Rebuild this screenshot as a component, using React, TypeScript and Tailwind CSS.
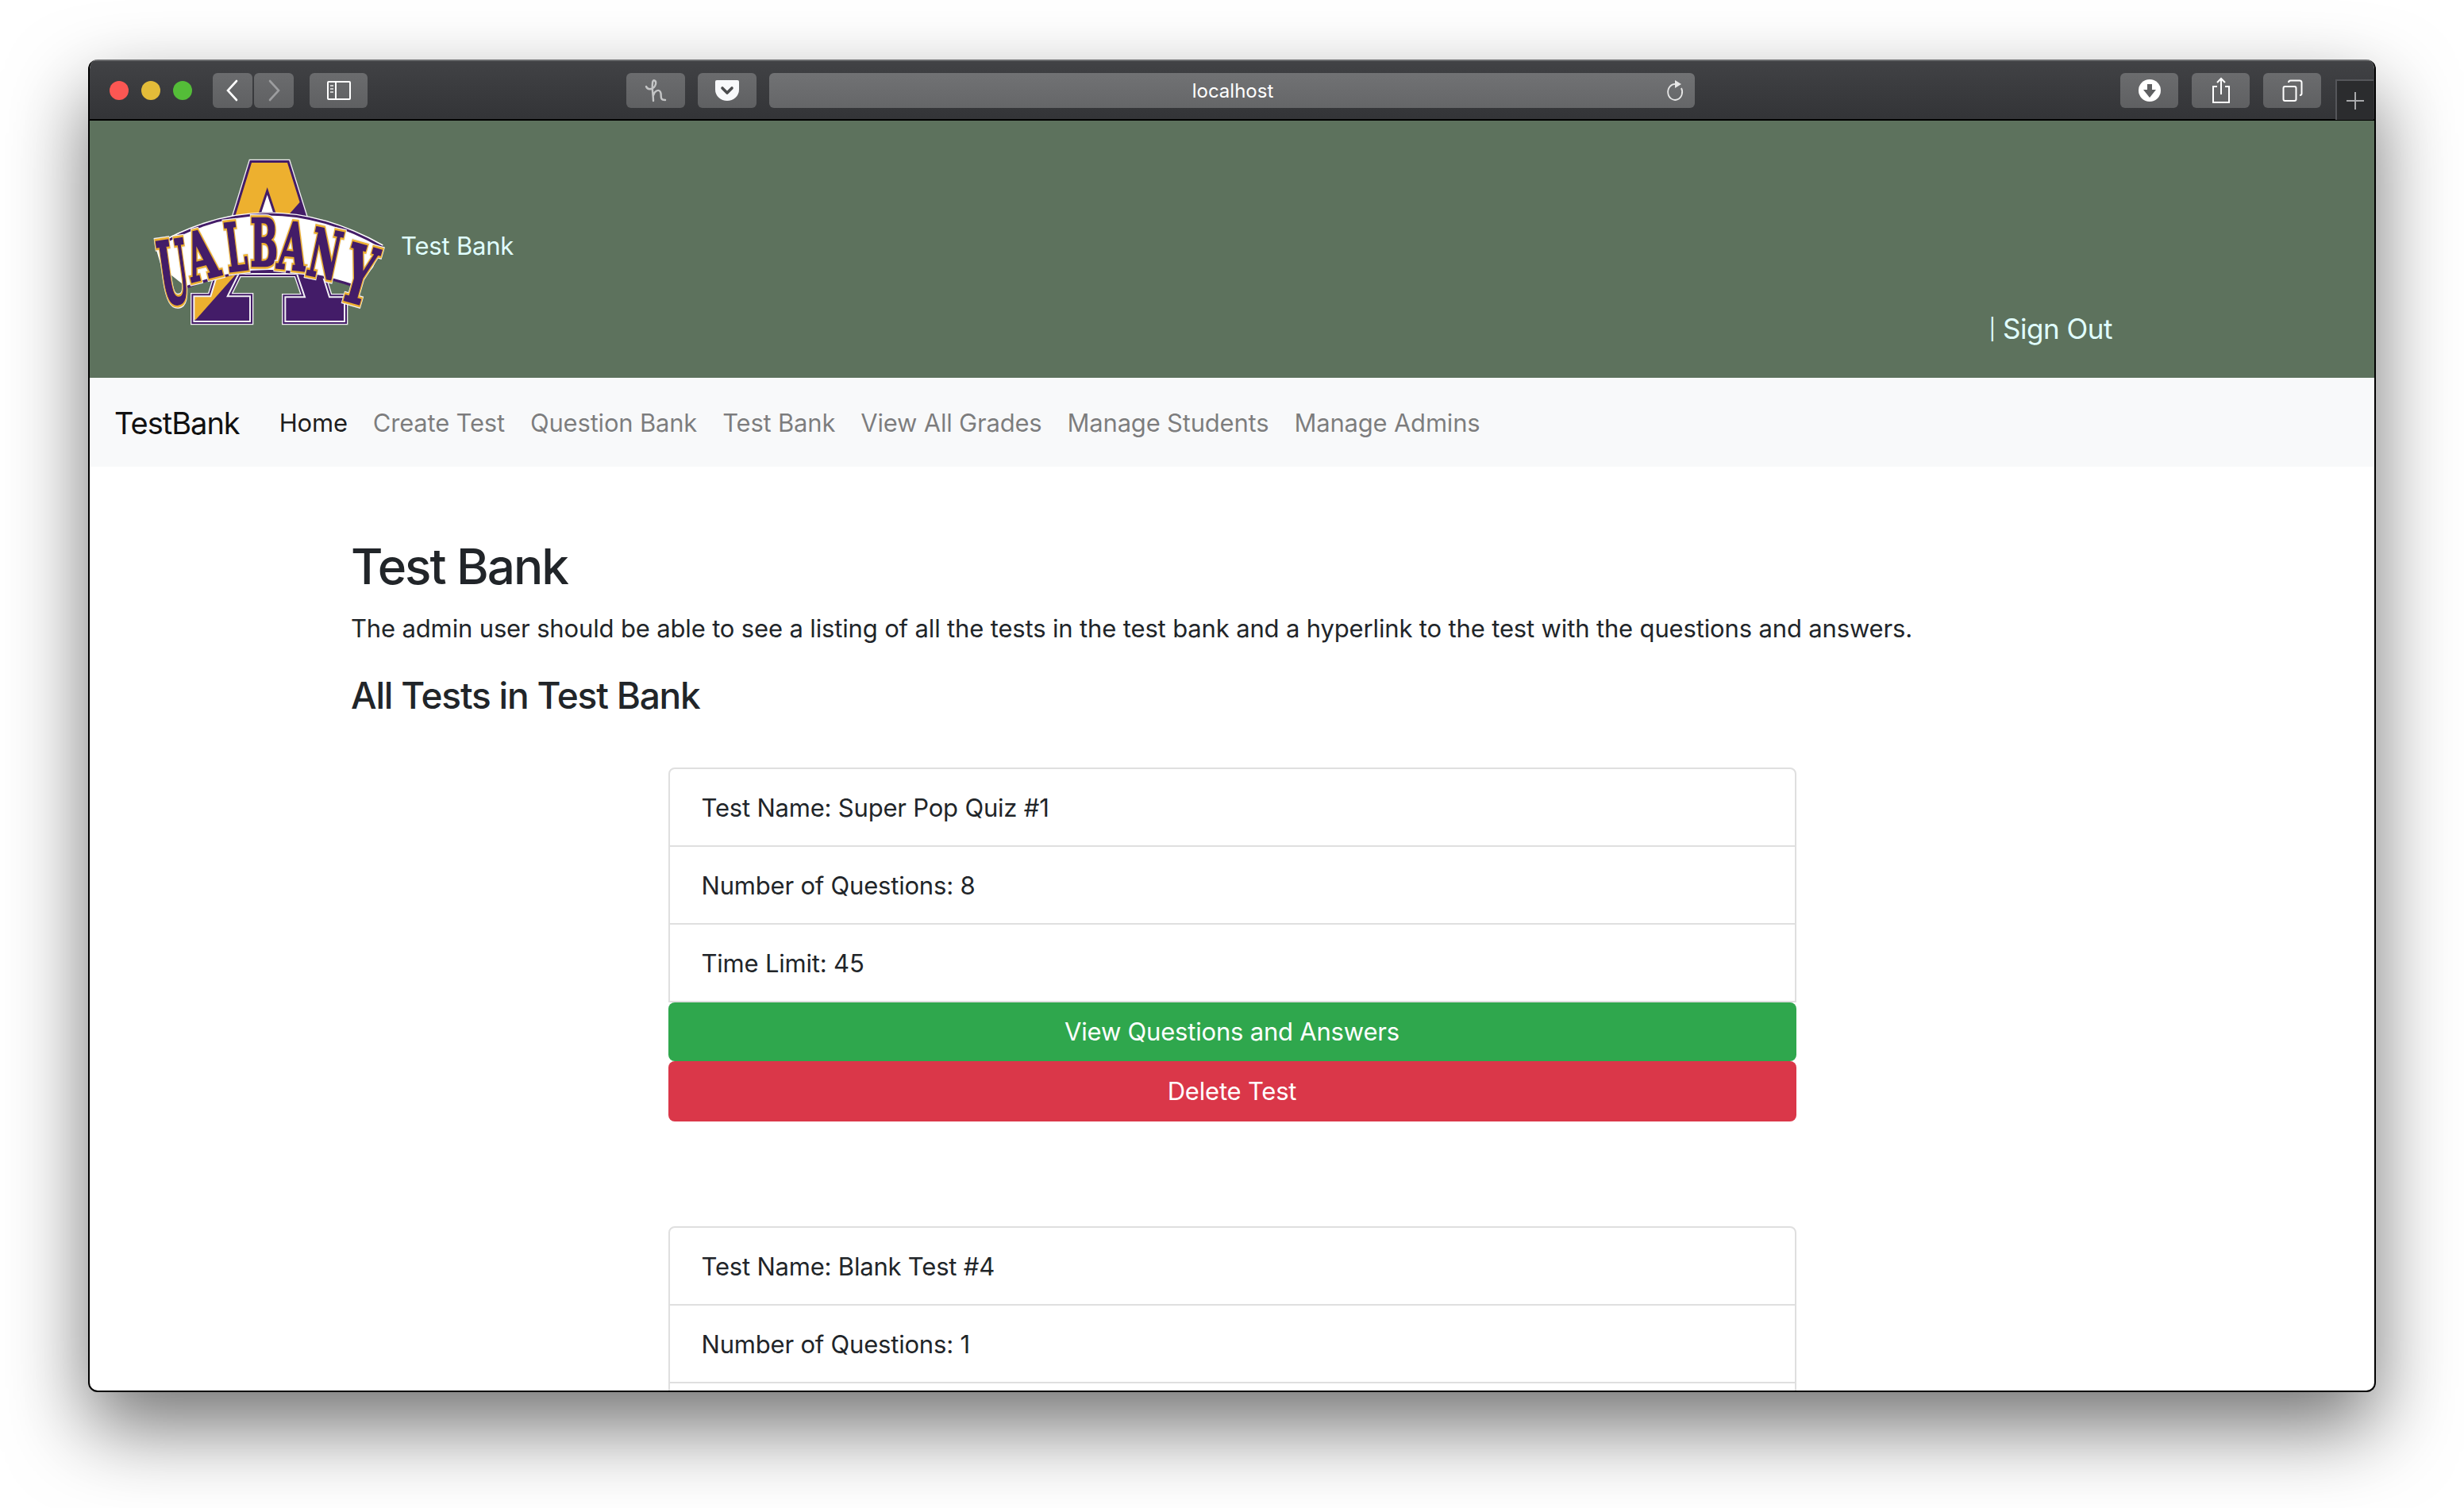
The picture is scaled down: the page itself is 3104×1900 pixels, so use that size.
const listItem = "border-2 border-[#dfdfdf] -mt-[2px] first:mt-0 first:rounded-t-lg px-10 pt-[25px] pb-[23px] leading-12 text-[31px] text-[#212529]";
const letterClass = "font-['DejaVu_Serif',serif] [vector-effect:non-scaling-stroke]";

function Logo() {
  const aShape = "M441,75 L576,75 L735,583 L792,583 L792,675 L568,675 L568,583 L642,583 L612,495 L392,495 L350,580 L435,580 L435,675 L223,675 L223,580 L286,580 Z";
  const letters = [
    { c: "U", x: 162, y: 606, r: -8, sx: 1.25, sy: 3.3 },
    { c: "A", x: 272, y: 512, r: -14, sx: 1.5, sy: 2.5 },
    { c: "L", x: 392, y: 482, r: -7, sx: 1.1, sy: 2.5 },
    { c: "B", x: 488, y: 466, r: 0, sx: 1.22, sy: 2.45 },
    { c: "A", x: 588, y: 478, r: 6, sx: 1.4, sy: 2.45 },
    { c: "N", x: 700, y: 508, r: 12, sx: 1.28, sy: 2.5 },
    { c: "Y", x: 818, y: 602, r: 16, sx: 1.55, sy: 3.0 },
  ];
  return (
    <svg viewBox="60 54 900 645" className="w-[300px] h-[215px] shrink-0">
      <defs>
        <clipPath id="aShape">
          <path d={aShape} />
        </clipPath>
        <clipPath id="lowerHalf">
          <rect x="150" y="480" width="700" height="220" />
        </clipPath>
      </defs>
      <path d={aShape} fill="none" stroke="#f2f0f4" strokeWidth="26" />
      <path d={aShape} fill="none" stroke="#431c68" strokeWidth="18" />
      <path d={aShape} fill="#431c68" />
      <g clipPath="url(#aShape)">
        <path d="M230,668 L625,222 L625,40 L150,40 L150,668 Z" fill="#edb02f" />
      </g>
      <path d={aShape} fill="none" stroke="#f2f0f4" strokeWidth="6" clipPath="url(#lowerHalf)" />
      <path d="M500,182 L528,266 L472,266 Z" fill="#fff" stroke="#431c68" strokeWidth="9" />
      <path d="M75,385 Q500,139 938,385 L900,470 L838,548 Q500,425 198,548 L100,470 Z" fill="#fff" />
      <path d="M80,394 Q500,146 935,394" fill="none" stroke="#431c68" strokeWidth="9" />
      <path d="M198,545 Q500,425 840,545" fill="none" stroke="#431c68" strokeWidth="10" />
      {letters.map((l, i) => (
        <g key={i} transform={`translate(${l.x} ${l.y}) rotate(${l.r}) scale(${l.sx} ${l.sy})`} fontSize="100" fontWeight="700" textAnchor="middle">
          <text className={letterClass} fill="#fff" stroke="#f2f0f4" strokeWidth="8">{l.c}</text>
          <text className={letterClass} fill="#431c68" stroke="#edb02f" strokeWidth="6">{l.c}</text>
          <text className={letterClass} fill="#431c68" stroke="#431c68" strokeWidth="2">{l.c}</text>
        </g>
      ))}
    </svg>
  );
}

function ToolbarButton({ w, children, className = "" }: { w: string; children?: React.ReactNode; className?: string }) {
  return (
    <div className={`${w} h-[44px] rounded-md bg-gradient-to-b from-[#6b6c6e] to-[#5f6062] flex items-center justify-center shrink-0 ${className}`}>
      {children}
    </div>
  );
}

function TitleBar() {
  return (
    <div className="h-[77px] shrink-0 bg-gradient-to-b from-[#414245] to-[#333437] border-t-2 border-t-[#6a6b6d] border-b-2 border-b-black flex items-center pl-[25px] pr-[1px]">
      <div className="flex gap-4 shrink-0">
        <div className="w-6 h-6 rounded-full bg-[#fc5753]" />
        <div className="w-6 h-6 rounded-full bg-[#e3bc39]" />
        <div className="w-6 h-6 rounded-full bg-[#54bd38]" />
      </div>
      <div className="flex gap-[2px] ml-[26px]">
        <ToolbarButton w="w-[50px]">
          <svg width="20" height="28" viewBox="0 0 20 28" fill="none" stroke="#fff" strokeWidth="2.6" strokeLinecap="round"><path d="M15 2 L4 14 L15 26" /></svg>
        </ToolbarButton>
        <ToolbarButton w="w-[50px]">
          <svg width="20" height="28" viewBox="0 0 20 28" fill="none" stroke="#9c9d9f" strokeWidth="2.6" strokeLinecap="round"><path d="M5 2 L16 14 L5 26" /></svg>
        </ToolbarButton>
      </div>
      <ToolbarButton w="w-[73px]" className="ml-[20px]">
        <svg width="32" height="26" viewBox="0 0 32 26" fill="none" stroke="#fff" strokeWidth="2"><rect x="2" y="2" width="28" height="22" rx="1" /><path d="M12 2 V24" /><path d="M5 7 H9 M5 11 H9 M5 15 H9" stroke="#ccc" /></svg>
      </ToolbarButton>
      <ToolbarButton w="w-[74px]" className="ml-[326px]">
        <svg width="28" height="30" viewBox="0 0 28 30" fill="none" stroke="#c4c5c6" strokeWidth="2.4" strokeLinecap="round"><path d="M2 10 C4 15 12 14 14 7 C15 2 10 0 10 6 C9 13 11 21 11 28 M11 21 C13 15 18 13 20 17 C22 21 18 27 26 27" /></svg>
      </ToolbarButton>
      <ToolbarButton w="w-[74px]" className="ml-4">
        <svg width="30" height="26" viewBox="0 0 30 26"><path d="M0 2 Q0 0 2 0 H28 Q30 0 30 2 V12 C30 20 23 26 15 26 C7 26 0 20 0 12 Z" fill="#f8f9fb" /><path d="M9 10 L15 16 L21 10" fill="none" stroke="#4b4c4e" strokeWidth="3.6" strokeLinecap="round" strokeLinejoin="round" /></svg>
      </ToolbarButton>
      <div className="w-[1166px] ml-4 h-[44px] rounded-md bg-gradient-to-b from-[#717274] to-[#656668] flex items-center justify-between shrink-0">
        <div className="flex-1 text-center text-[24px] leading-none tracking-normal text-white pl-[39px] pt-[2px]">localhost</div>
        <svg width="24" height="28" viewBox="0 0 24 28" fill="none" className="mr-[13px]"><path d="M13 6 A9 10 0 1 0 20 11" stroke="#e6e6e6" strokeWidth="1.8" /><path d="M12 1 L20 6 L12 11 Z" fill="#e6e6e6" /></svg>
      </div>
      <ToolbarButton w="w-[73px]" className="ml-auto">
        <svg width="28" height="28" viewBox="0 0 28 28"><circle cx="14" cy="14" r="14" fill="#fff" /><path d="M11 6 H17 V13 H22 L14 23 L6 13 H11 Z" fill="#5f6062" /></svg>
      </ToolbarButton>
      <ToolbarButton w="w-[73px]" className="ml-[17px]">
        <svg width="24" height="34" viewBox="0 0 24 34" fill="none" stroke="#fff" strokeWidth="2"><path d="M7 12 H2 V32 H22 V12 H17 M12 22 V2 M7 7 L12 2 L17 7" /></svg>
      </ToolbarButton>
      <ToolbarButton w="w-[73px]" className="ml-[17px]">
        <svg width="26" height="28" viewBox="0 0 26 28" fill="none" stroke="#fff" strokeWidth="2"><rect x="1.5" y="9" width="16" height="18" rx="2" /><path d="M8 4 Q8 1.5 10.5 1.5 H22 Q24.5 1.5 24.5 4 V18 Q24.5 20 22 20" /></svg>
      </ToolbarButton>
      <div className="w-[48px] h-[51px] mt-[24px] ml-[18px] bg-[#2b2c2e] border-l-2 border-t-2 border-[#55565a] flex items-center justify-center shrink-0">
        <svg width="24" height="24" viewBox="0 0 24 24" stroke="#a9aaac" strokeWidth="2"><path d="M12 1 V23 M1 12 H23" /></svg>
      </div>
    </div>
  );
}

const navLinks = ["Create Test", "Question Bank", "Test Bank", "View All Grades", "Manage Students", "Manage Admins"];

function TestCard({ name, count, limit }: { name: string; count: number; limit: number }) {
  return (
    <div className="w-[1421px] mx-auto">
      <div className={listItem}>Test Name: {name}</div>
      <div className={listItem}>Number of Questions: {count}</div>
      <div className={listItem}>Time Limit: {limit}</div>
      <div className="h-[74px] rounded-lg bg-[#2fa74d] text-white text-[31px] flex items-center justify-center">View Questions and Answers</div>
      <div className="h-[76px] rounded-lg bg-[#da3749] text-white text-[31px] flex items-center justify-center">Delete Test</div>
    </div>
  );
}

export default function App() {
  return (
    <div className="w-[3104px] h-[1900px] bg-white overflow-hidden pt-[75px] pl-[111px] font-['Inter',sans-serif] tracking-[-0.2px]">
      <div className="w-[2882px] h-[1679px] rounded-[12px] border-2 border-black border-t-0 bg-white shadow-[0_44px_100px_rgba(0,0,0,0.55)] overflow-hidden flex flex-col">
        <TitleBar />
        <div className="h-[324px] shrink-0 bg-[#5d725d] flex pl-[77px] pr-[330px] justify-between">
          <div className="flex items-center gap-[15px] pt-[46px] self-start">
            <Logo />
            <div className="text-[31px] text-[#e0ffff] mt-[10px]">Test Bank</div>
          </div>
          <div className="self-end mb-[34px] text-[35px] leading-[54px] text-[#e0ffff] tracking-[-0.48px]">
            <span className="text-[26px] align-[3px]">|</span> Sign Out
          </div>
        </div>
        <nav className="h-[112px] shrink-0 bg-[#f8f9fa] flex items-center px-[31px] pt-[2px] tracking-[-0.2px]">
          <div className="text-[38px] text-[#111] mr-[34px] tracking-[-1px]">TestBank</div>
          <div className="px-4 text-[31px] text-black/90">Home</div>
          {navLinks.map((l) => (
            <div key={l} className="px-4 text-[31px] text-black/50">{l}</div>
          ))}
        </nav>
        <main className="pl-[329px] pr-[329px] pt-[88px] text-[#212529]">
          <h1 className="text-[62px] leading-[76px] font-[550] tracking-[-2px]">Test Bank</h1>
          <p className="text-[31px] leading-[48px] mt-[16px] tracking-[-0.15px]">The admin user should be able to see a listing of all the tests in the test bank and a hyperlink to the test with the questions and answers.</p>
          <h3 className="text-[46px] leading-[58px] font-[550] mt-[31px] tracking-[-1.2px]">All Tests in Test Bank</h3>
          <div className="mt-[62px] flex flex-col gap-[132px]">
            <TestCard name="Super Pop Quiz #1" count={8} limit={45} />
            <TestCard name="Blank Test #4" count={1} limit={30} />
          </div>
        </main>
      </div>
    </div>
  );
}
